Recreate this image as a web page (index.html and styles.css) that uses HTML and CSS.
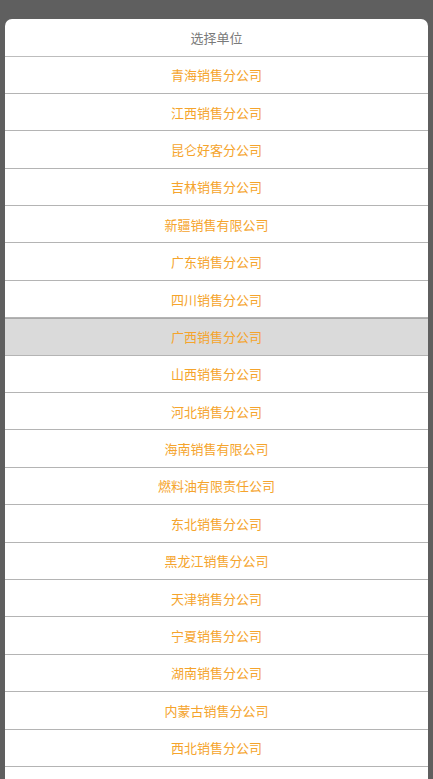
FILE: index.html
```html
<!DOCTYPE html>
<html lang="zh">
<head>
  <meta charset="UTF-8">
  <meta name="viewport" content="width=device-width, initial-scale=1.0">
  <title>选择单位</title>
  <link rel="stylesheet" href="styles.css">
</head>
<body>
  <div class="sheet">
    <div class="sheet-title">选择单位</div>
    <ul class="unit-list">
      <li>青海销售分公司</li>
      <li>江西销售分公司</li>
      <li>昆仑好客分公司</li>
      <li>吉林销售分公司</li>
      <li>新疆销售有限公司</li>
      <li>广东销售分公司</li>
      <li>四川销售分公司</li>
      <li class="active">广西销售分公司</li>
      <li>山西销售分公司</li>
      <li>河北销售分公司</li>
      <li>海南销售有限公司</li>
      <li>燃料油有限责任公司</li>
      <li>东北销售分公司</li>
      <li>黑龙江销售分公司</li>
      <li>天津销售分公司</li>
      <li>宁夏销售分公司</li>
      <li>湖南销售分公司</li>
      <li>内蒙古销售分公司</li>
      <li>西北销售分公司</li>
      <li></li>
    </ul>
  </div>
</body>
</html>
```

FILE: styles.css
```css
* {
  margin: 0;
  padding: 0;
  box-sizing: border-box;
}
html, body {
  height: 100%;
  overflow: hidden;
}
body {
  background: #5f5f5f;
  font-family: "Noto Sans CJK SC", "Noto Sans", sans-serif;
  font-size: 13px;
  padding: 19px 5px 0;
}
.sheet {
  background: #fff;
  border-radius: 7px 7px 0 0;
  overflow: hidden;
}
.sheet-title {
  height: 37.5px;
  display: flex;
  align-items: center;
  justify-content: center;
  color: #7a7a7a;
  border-bottom: 1px solid #bdbdbd;
}
.unit-list {
  list-style: none;
}
.unit-list li {
  height: 37.4px;
  display: flex;
  align-items: center;
  justify-content: center;
  color: #f5a42c;
  border-bottom: 1px solid #b4b4b4;
}
.unit-list li.active {
  background: #dadada;
  box-shadow: inset 0 1px #aaa;
}
```
